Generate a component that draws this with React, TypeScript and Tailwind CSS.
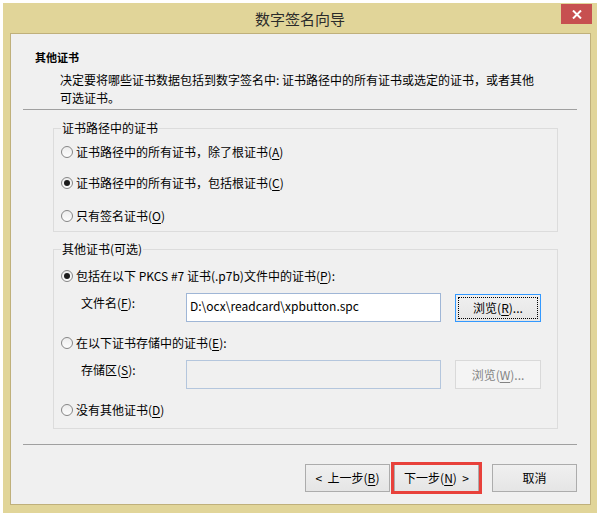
import React from 'react';

const font = "font-['Noto_Sans_CJK_SC','Noto_Sans',sans-serif]";

function U({ children }: { children: React.ReactNode }) {
  return <span className="underline underline-offset-2">{children}</span>;
}

function Radio({ checked, children }: { checked?: boolean; children: React.ReactNode }) {
  return (
    <div className="flex h-[20px] items-center gap-[3px]">
      <span className="flex h-[12px] w-[12px] items-center justify-center rounded-full border border-[#868686] bg-gradient-to-b from-[#ededed] to-[#fcfcfc]">
        {checked && <span className="h-[6px] w-[6px] rounded-full bg-[#1c1c1c]" />}
      </span>
      <span className="leading-[16px] whitespace-nowrap">{children}</span>
    </div>
  );
}

function Btn({ children, className = '' }: { children: React.ReactNode; className?: string }) {
  return (
    <div
      className={
        'flex h-[28px] w-[85px] items-center justify-center border border-[#acacac] bg-gradient-to-b from-[#f0f0f0] to-[#e5e5e5] leading-[16px] whitespace-pre ' +
        className
      }
    >
      {children}
    </div>
  );
}

export default function App() {
  return (
    <div className={'h-[516px] w-[603px] overflow-hidden bg-white pl-[3px] pt-[3px] text-[12px] text-black ' + font}>
      <div className="relative flex h-[510px] w-[594px] flex-col bg-[#e1d599]">
        {/* title bar */}
        <div className="flex h-[30px] shrink-0 items-center justify-center pt-[3px] text-[15px] text-[#2b2b2b]">
          数字签名向导
        </div>
        <div className="absolute right-[5px] top-[1px] flex h-[20px] w-[31px] items-center justify-center bg-[#c75050]">
          <svg width="10" height="9" viewBox="0 0 10 9">
            <path d="M1 0.5 L9 8.5 M9 0.5 L1 8.5" stroke="white" strokeWidth="2" />
          </svg>
        </div>

        {/* client area */}
        <div className="mb-[8px] ml-[7px] mr-[6px] flex flex-1 flex-col border border-[#bfb07b] bg-[#f0f0f0]">
          <div className="mt-[15px] pl-[24px] text-[11px] font-bold leading-[16px]">其他证书</div>
          <div className="mt-[6px] pl-[49px] leading-[18px] whitespace-nowrap">
            决定要将哪些证书数据包括到数字签名中: 证书路径中的所有证书或选定的证书，或者其他
            <br />
            可选证书。
          </div>
          <div className="ml-[12px] mr-[13px] mt-[2px] h-px bg-[#a0a0a0]" />

          <fieldset className="ml-[42px] mt-[10px] w-[505px] border border-[#dcdcdc] pb-[5px] pl-[7px] pt-[6px]">
            <legend className="px-[1px] leading-[16px]">证书路径中的证书</legend>
            <Radio>
              证书路径中的所有证书，除了根证书(<U>A</U>)
            </Radio>
            <div className="mt-[11px]">
              <Radio checked>
                证书路径中的所有证书，包括根证书(<U>C</U>)
              </Radio>
            </div>
            <div className="mt-[13px]">
              <Radio>
                只有签名证书(<U>O</U>)
              </Radio>
            </div>
          </fieldset>

          <fieldset className="ml-[42px] mt-[9px] w-[505px] border border-[#dcdcdc] pb-[8px] pl-[7px] pt-[9px]">
            <legend className="px-[1px] leading-[16px]">其他证书(可选)</legend>
            <Radio checked>
              包括在以下 PKCS #7 证书(.p7b)文件中的证书(<U>P</U>):
            </Radio>
            <div className="mt-[7px] flex items-start">
              <div className="w-[125px] pl-[20px] pt-[2px] leading-[16px]">
                文件名(<U>F</U>):
              </div>
              <div className="h-[29px] w-[255px] border border-[#9fb6d6] bg-white pl-[3px] pt-[4px] leading-[16px]">
                D:\ocx\readcard\xpbutton.spc
              </div>
              <div className="ml-[14px] mt-[1px] flex h-[28px] w-[86px] items-center justify-center border border-[#3399ff] bg-gradient-to-b from-[#f0f0f0] to-[#e5e5e5] p-[2px]">
                <div className="flex h-full w-full items-center justify-center border border-dotted border-black leading-[16px]">
                  浏览(<U>R</U>)...
                </div>
              </div>
            </div>
            <div className="mt-[11px]">
              <Radio>
                在以下证书存储中的证书(<U>E</U>):
              </Radio>
            </div>
            <div className="mt-[7px] flex items-start">
              <div className="w-[125px] pl-[20px] pt-[2px] leading-[16px]">
                存储区(<U>S</U>):
              </div>
              <div className="h-[29px] w-[255px] border border-[#b4c6dd] bg-[#f0f0f0]" />
              <div className="ml-[14px] flex h-[29px] w-[86px] items-center justify-center border border-[#d9d9d9] bg-[#f4f4f4] leading-[16px] text-[#838383]">
                浏览(<U>W</U>)...
              </div>
            </div>
            <div className="mt-[11px]">
              <Radio>
                没有其他证书(<U>D</U>)
              </Radio>
            </div>
          </fieldset>

          <div className="ml-[12px] mr-[13px] mt-[15px] h-px bg-[#a0a0a0]" />

          <div className="mt-[19px] flex justify-end pr-[13px]">
            <Btn>
              {'<  上一步('}<U>B</U>)
            </Btn>
            <div className="relative ml-[4px]">
              <Btn>
                下一步(<U>N</U>){'  >'}
              </Btn>
              <div className="pointer-events-none absolute -bottom-[2px] -left-[3px] -right-[3px] -top-[2px] border-[3px] border-[#e8413b]" />
            </div>
            <Btn className="ml-[13px]">取消</Btn>
          </div>
        </div>
      </div>
    </div>
  );
}
